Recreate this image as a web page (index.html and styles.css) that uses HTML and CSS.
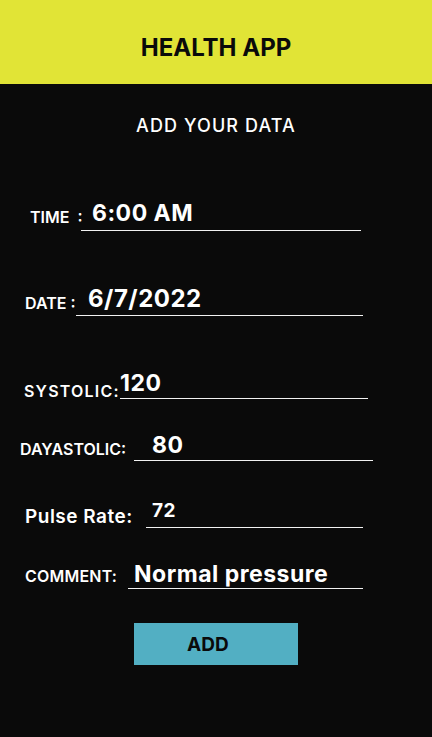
FILE: index.html
```html
<!DOCTYPE html>
<html lang="en">
<head>
<meta charset="utf-8">
<title>Health App</title>
<link rel="stylesheet" href="styles.css">
</head>
<body>
<header class="header"><h1 class="title">HEALTH APP</h1></header>
<main class="main">
  <h2 class="subtitle">ADD YOUR DATA</h2>
  <div class="row row--time">
    <span class="label">TIME&nbsp;&nbsp;:</span>
    <div class="field"><span class="value">6:00 AM</span></div>
  </div>
  <div class="row row--date">
    <span class="label">DATE :</span>
    <div class="field"><span class="value">6/7/2022</span></div>
  </div>
  <div class="row row--sys">
    <span class="label">SYSTOLIC:</span>
    <div class="field"><span class="value">120</span></div>
  </div>
  <div class="row row--dia">
    <span class="label">DAYASTOLIC:</span>
    <div class="field"><span class="value">80</span></div>
  </div>
  <div class="row row--pulse">
    <span class="label">Pulse Rate:</span>
    <div class="field"><span class="value">72</span></div>
  </div>
  <div class="row row--comment">
    <span class="label">COMMENT:</span>
    <div class="field"><span class="value">Normal pressure</span></div>
  </div>
  <button class="btn" type="button">ADD</button>
</main>
</body>
</html>
```
FILE: styles.css
```css
* { box-sizing: border-box; }
html, body { margin: 0; padding: 0; }
body {
  background: #0a0a0a;
  font-family: Inter, "Noto Sans", sans-serif;
  color: #fff;
  width: 432px;
  height: 737px;
  overflow: hidden;
}
.header {
  background: #e1e436;
  height: 84px;
  padding-top: 36px;
}
.title {
  margin: 0;
  text-align: center;
  font-size: 24px;
  line-height: 1;
  font-weight: 700;
  color: #0a0a0a;
}
.main { display: flex; flex-direction: column; }
.subtitle {
  margin: 33px 0 0;
  text-align: center;
  font-size: 18px;
  line-height: 1;
  font-weight: 500;
  letter-spacing: 1.1px;
}
.row {
  display: flex;
  align-items: flex-end;
}
.label {
  flex: none;
  font-size: 16px;
  line-height: 1;
  font-weight: 600;
  white-space: nowrap;
}
.field {
  flex: none;
  border-bottom: 1px solid #f2f2f2;
}
.value {
  display: block;
  font-size: 23px;
  line-height: 1;
  font-weight: 700;
  letter-spacing: 0.5px;
  white-space: nowrap;
}

.row--time { margin-top: 67px; padding-left: 30px; }
.row--time .label { width: 51px; padding-bottom: 6px; }
.row--time .field { width: 280px; padding-left: 11px; }
.row--time .value { padding-bottom: 5px; }

.row--date { margin-top: 56px; padding-left: 25px; }
.row--date .label { width: 51px; padding-bottom: 5px; }
.row--date .field { width: 287px; padding-left: 12px; }
.row--date .value { font-size: 24px; padding-bottom: 4px; }

.row--sys { margin-top: 56px; padding-left: 24px; }
.row--sys .label { width: 96px; padding-bottom: 0; letter-spacing: 1.2px; }
.row--sys .field { width: 248px; padding-left: 0; }
.row--sys .value { padding-bottom: 3px; }

.row--dia { margin-top: 35px; padding-left: 20px; }
.row--dia .label { width: 114px; padding-bottom: 4px; }
.row--dia .field { width: 239px; padding-left: 18px; }
.row--dia .value { padding-bottom: 3px; }

.row--pulse { margin-top: 40px; padding-left: 25px; }
.row--pulse .label { width: 121px; padding-bottom: 2px; font-size: 19px; letter-spacing: 0.5px; }
.row--pulse .field { width: 217px; padding-left: 6px; }
.row--pulse .value { font-size: 19px; padding-bottom: 7px; }

.row--comment { margin-top: 35px; padding-left: 25px; }
.row--comment .label { width: 103px; padding-bottom: 5px; letter-spacing: 0.2px; }
.row--comment .field { width: 235px; padding-left: 6px; }
.row--comment .value { padding-bottom: 2px; }

.btn {
  align-self: flex-start;
  margin: 34px 0 0 134px;
  width: 164px;
  height: 42px;
  padding: 0 0 0 53px;
  border: 0;
  background: #52afc3;
  color: #0a0a0a;
  font-family: Inter, "Noto Sans", sans-serif;
  font-size: 19px;
  line-height: 1;
  font-weight: 700;
  text-align: left;
}
```
